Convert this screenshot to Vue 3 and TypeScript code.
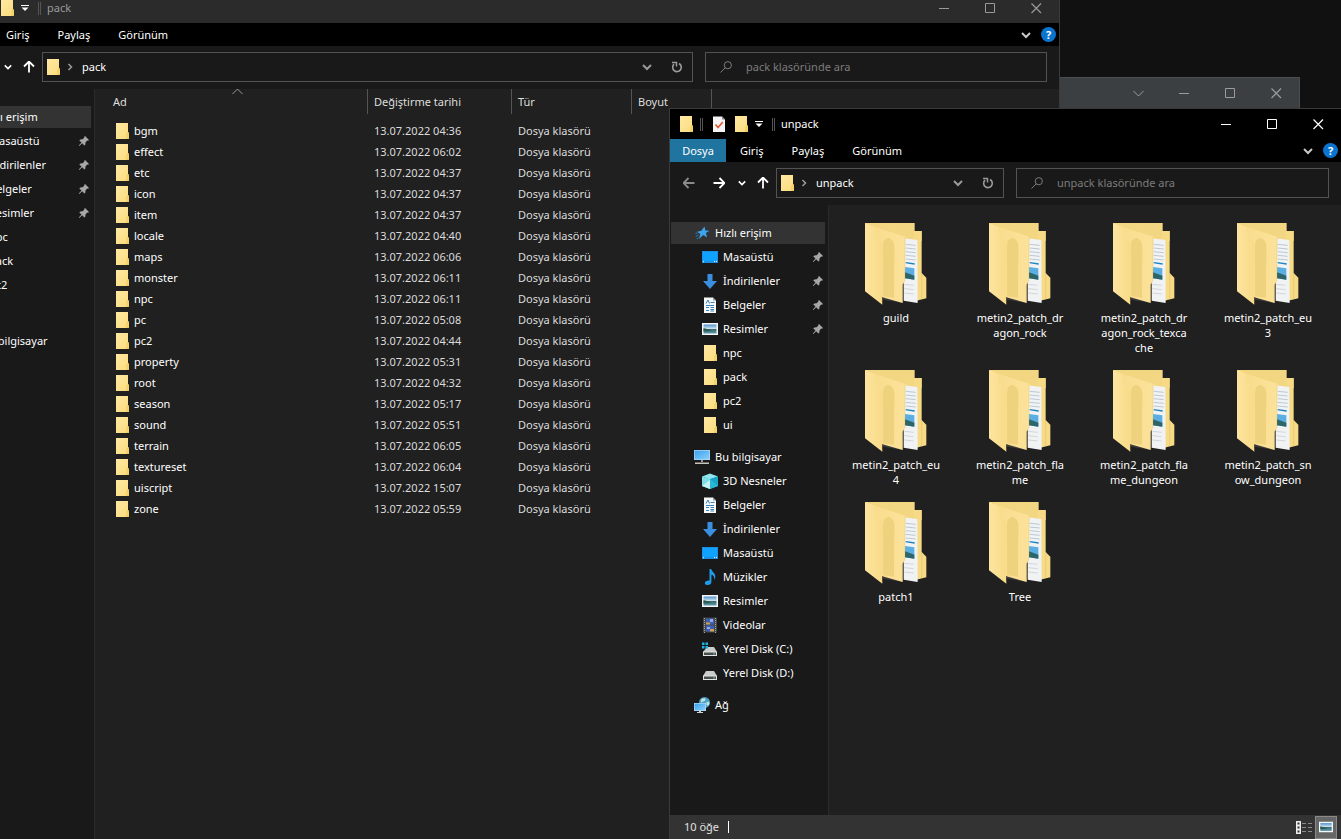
<script setup lang="ts">
import { ref } from 'vue'

interface NavItem {
  label: string
  icon: string
  child?: boolean
  pinned?: boolean
}

interface ExplorerWindow {
  id: string
  title: string
  active: boolean
  nav: NavItem[][]
}

interface FileRow {
  name: string
  date: string
}

const quickAccess: NavItem[] = [
  { label: 'Hızlı erişim', icon: 'star' },
  { label: 'Masaüstü', icon: 'desktop', child: true, pinned: true },
  { label: 'İndirilenler', icon: 'download', child: true, pinned: true },
  { label: 'Belgeler', icon: 'document', child: true, pinned: true },
  { label: 'Resimler', icon: 'picture', child: true, pinned: true },
  { label: 'npc', icon: 'folder', child: true },
  { label: 'pack', icon: 'folder', child: true },
  { label: 'pc2', icon: 'folder', child: true },
  { label: 'ui', icon: 'folder', child: true },
]

const computer: NavItem[] = [
  { label: 'Bu bilgisayar', icon: 'computer' },
  { label: '3D Nesneler', icon: 'cube', child: true },
  { label: 'Belgeler', icon: 'document', child: true },
  { label: 'İndirilenler', icon: 'download', child: true },
  { label: 'Masaüstü', icon: 'desktop', child: true },
  { label: 'Müzikler', icon: 'music', child: true },
  { label: 'Resimler', icon: 'picture', child: true },
  { label: 'Videolar', icon: 'video', child: true },
  { label: 'Yerel Disk (C:)', icon: 'disk-system', child: true },
  { label: 'Yerel Disk (D:)', icon: 'disk', child: true },
]

const windows: ExplorerWindow[] = [
  { id: 'pack', title: 'pack', active: false, nav: [quickAccess, computer.slice(0, 1)] },
  {
    id: 'unpack',
    title: 'unpack',
    active: true,
    nav: [quickAccess, computer, [{ label: 'Ağ', icon: 'network' }]],
  },
]

const tabs = ['Giriş', 'Paylaş', 'Görünüm']

const files: FileRow[] = [
  { name: 'bgm', date: '13.07.2022 04:36' },
  { name: 'effect', date: '13.07.2022 06:02' },
  { name: 'etc', date: '13.07.2022 04:37' },
  { name: 'icon', date: '13.07.2022 04:37' },
  { name: 'item', date: '13.07.2022 04:37' },
  { name: 'locale', date: '13.07.2022 04:40' },
  { name: 'maps', date: '13.07.2022 06:06' },
  { name: 'monster', date: '13.07.2022 06:11' },
  { name: 'npc', date: '13.07.2022 06:11' },
  { name: 'pc', date: '13.07.2022 05:08' },
  { name: 'pc2', date: '13.07.2022 04:44' },
  { name: 'property', date: '13.07.2022 05:31' },
  { name: 'root', date: '13.07.2022 04:32' },
  { name: 'season', date: '13.07.2022 05:17' },
  { name: 'sound', date: '13.07.2022 05:51' },
  { name: 'terrain', date: '13.07.2022 06:05' },
  { name: 'textureset', date: '13.07.2022 06:04' },
  { name: 'uiscript', date: '13.07.2022 15:07' },
  { name: 'zone', date: '13.07.2022 05:59' },
]

const tiles: string[] = [
  'guild',
  'metin2_patch_dr\nagon_rock',
  'metin2_patch_dr\nagon_rock_texca\nche',
  'metin2_patch_eu\n3',
  'metin2_patch_eu\n4',
  'metin2_patch_fla\nme',
  'metin2_patch_fla\nme_dungeon',
  'metin2_patch_sn\now_dungeon',
  'patch1',
  'Tree',
]

const queries = ref<Record<string, string>>({ pack: '', unpack: '' })
</script>

<template>
  <main class="desktop">
    <svg class="sprite" aria-hidden="true">
      <defs>
        <linearGradient id="g-folder" x1="0" y1="0" x2="1" y2="1">
          <stop offset="0" stop-color="#ffe9a2" />
          <stop offset="1" stop-color="#fbdc7e" />
        </linearGradient>
        <linearGradient id="g-front" x1="0" y1="0" x2="1" y2="0">
          <stop offset="0" stop-color="#f8dc8c" />
          <stop offset="1" stop-color="#fce29a" />
        </linearGradient>
        <linearGradient id="g-flap" x1="0" y1="0" x2="1" y2="0">
          <stop offset="0" stop-color="#fde49f" />
          <stop offset="1" stop-color="#f8db88" />
        </linearGradient>
        <linearGradient id="g-screen" x1="0" y1="0" x2="1" y2="1">
          <stop offset="0" stop-color="#3aa0ee" />
          <stop offset="1" stop-color="#8bd0fb" />
        </linearGradient>
        <linearGradient id="g-photo" x1="0" y1="0" x2="0" y2="1">
          <stop offset="0" stop-color="#4d93cf" />
          <stop offset="0.5" stop-color="#d5e8f2" />
          <stop offset="0.55" stop-color="#3c6b6c" />
          <stop offset="1" stop-color="#5d9ab0" />
        </linearGradient>
      </defs>
      <symbol id="i-folder" viewBox="0 0 16 16">
        <path d="M2 0h12v9l1 1v6H2z" fill="url(#g-folder)" />
        <path d="M12.500 16V11l1-1.500H15V16z" fill="#efc850" />
        <path d="M13.500 15v-4h1v4z" fill="#fde08a" />
      </symbol>
      <symbol id="i-check-doc" viewBox="0 0 16 16">
        <path d="M2 0.500h9l3 3V16H2z" fill="#f4f4f4" />
        <path d="M11 0.500v3h3z" fill="#8b8b8b" />
        <path d="M4.500 8.500l2.500 3L11.800 6" fill="none" stroke="#e2572b" stroke-width="1.600" />
      </symbol>
      <symbol id="i-star" viewBox="0 0 16 16">
        <path
          d="M10.500 1.500l.9 4.100 4.100.2-3.600 2.300 1.200 4.500-3.900-2.500L5 14l1.300-4.900L3 6.700l4.300-.9z"
          fill="#3aa5ee"
        />
        <path d="M3.500 8l-2 .4M4.500 10l-2.800 1.500M4.800 12.500l-2 1.500" stroke="#2b7fc0" fill="none" />
      </symbol>
      <symbol id="i-desktop" viewBox="0 0 16 16">
        <path d="M0 2h16v12H0z" fill="#1b8fe6" />
        <path d="M1 3h14v9H1z" fill="#0fa2ff" />
        <path d="M1 12.500h1M12 12.500h1M14 12.500h1" stroke="#d9f0ff" />
      </symbol>
      <symbol id="i-download" viewBox="0 0 16 16">
        <path d="M5.500 1h5v7H15l-7 8-7-8h4.500z" fill="#3a8fe0" />
      </symbol>
      <symbol id="i-document" viewBox="0 0 16 16">
        <path d="M2 0.500h9l3 3V16H2z" fill="#f6f8fa" />
        <path d="M11 0.500v3h3z" fill="#8f9aa3" />
        <path d="M4 6.500L6 3l1.500 3.500M8.500 5.500h4M4 8.500h8M4 10.500h3M8.500 10.500H12M4 13.500h3M8.500 12.500H12M8.500 14H12" fill="none" stroke="#3583b8" />
      </symbol>
      <symbol id="i-picture" viewBox="0 0 16 16">
        <path d="M0 2h16v12H0z" fill="#f5f7f8" />
        <path d="M1.500 3.500h13v9h-13z" fill="url(#g-photo)" />
        <path d="M1.500 7l5 1.500 3 1.500-8 .5z" fill="#2f5a4e" />
      </symbol>
      <symbol id="i-computer" viewBox="0 0 16 16">
        <path d="M0 1h16v10H0z" fill="#b9dcf5" />
        <path d="M.6 1.600h14.800v8.800H.6z" fill="url(#g-screen)" />
        <path d="M7 11h2v2H7z" fill="#8e9ba5" />
        <path d="M1 13.500h14v1.500H1z" fill="#c9c3bd" />
      </symbol>
      <symbol id="i-cube" viewBox="0 0 16 16">
        <path d="M0 3.500L8 .5l8 3-8 3z" fill="#8fe6ef" />
        <path d="M0 3.500l8 2.500v10l-8-3z" fill="#7fdde8" />
        <path d="M0 13l8-6v9z" fill="#c3f3f4" />
        <path d="M16 3.500L8 6v10l8-3z" fill="#17a5cb" />
        <path d="M8 6l8 7-8 3z" fill="#2bb6d6" />
      </symbol>
      <symbol id="i-music" viewBox="0 0 16 16">
        <path
          d="M7.500 0h1.800c.2 2.600 4.200 4 4 7.800 0 1.300-.6 2.200-1.200 3 .5-2.700-.4-4.300-2.700-5.200V13c0 1.800-1.600 3-3.700 3-1.700 0-2.900-.8-2.900-2.100 0-1.600 1.900-2.700 4.700-2.500z"
          fill="#1f9bea"
        />
      </symbol>
      <symbol id="i-video" viewBox="0 0 16 16">
        <path d="M1 0.500h14v15H1z" fill="#45464a" />
        <path d="M2.500 1v15M13.500 1v15" stroke="#a7a7a7" stroke-dasharray="1 1" />
        <path d="M4 1.500h8v6H4zM4 8.500h8v6H4z" fill="#3c5fb4" />
        <path d="M4 5.500h4v2H4zM8 12h4v2.500H8z" fill="#c9a24b" />
        <path d="M8 2h3v3H8zM5 10h3v2H5z" fill="#98a9df" />
      </symbol>
      <symbol id="i-disk" viewBox="0 0 16 16">
        <path d="M4 6h8l3 5H1z" fill="#c9cdcc" />
        <path d="M1 10.500h14V15H1z" fill="#e1e4e2" />
        <path d="M2 11.500h12V14H2z" fill="#4a4d4d" />
        <path d="M11.500 12.200h1.200v1.200h-1.200z" fill="#7fe0c0" />
      </symbol>
      <symbol id="i-disk-system" viewBox="0 0 16 16">
        <path d="M5 6h7l3 5H1z" fill="#c9cdcc" />
        <path d="M1 10.500h14V15H1z" fill="#e1e4e2" />
        <path d="M2 11.500h12V14H2z" fill="#4a4d4d" />
        <path d="M11.500 12.200h1.200v1.200h-1.200z" fill="#7fe0c0" />
        <path d="M0 1.500h2.500V4H0zM3.500 1.500H6V4H3.500zM0 5h2.500v2.500H0zM3.500 5H6v2.500H3.500z" fill="#1cb7e8" />
      </symbol>
      <symbol id="i-network" viewBox="0 0 16 16">
        <circle cx="10.500" cy="5.500" r="5.500" fill="#4c9fc4" />
        <path d="M7 2.500c2-2 5-1.500 4.500.5S8 4 7 6zM12.500 5c2-.6 3 0 3 1.500S13 9.500 12.500 8z" fill="#bfe3dd" />
        <path d="M0 6h12v8H0z" fill="#b9dcf5" />
        <path d="M.6 6.600h10.800v6.800H.6z" fill="url(#g-screen)" />
        <path d="M5 14h2v1h2v1H3v-1h2z" fill="#cfd6da" />
      </symbol>
      <symbol id="i-pin" viewBox="0 0 12 12">
        <path d="M7 1l4 4-1 .8-.8-.2L7.500 7.500 7.300 9.800 6.300 10.600 4.200 8.300 1.300 11 .8 10.600 3.500 7.600 1.300 5.500l1-1 2.300-.2L6.400 2.600 6.200 1.700z" fill="#a7a7a7" />
      </symbol>
      <symbol id="i-menu-caret" viewBox="0 0 8 8">
        <path d="M0 1.500h8" stroke="currentColor" stroke-width="1" />
        <path d="M.5 3.500h7L4 7z" fill="currentColor" />
      </symbol>
      <symbol id="i-chevron" viewBox="0 0 10 10">
        <path d="M1 3l4 4 4-4" fill="none" stroke="currentColor" stroke-width="2" />
      </symbol>
      <symbol id="i-crumb" viewBox="0 0 10 10">
        <path d="M3.500 2l3 3-3 3" fill="none" stroke="currentColor" stroke-width="1.500" />
      </symbol>
      <symbol id="i-arrow" viewBox="0 0 12 12">
        <path d="M0.500 6h11M6.500 1l5 5-5 5" fill="none" stroke="currentColor" stroke-width="1.800" />
      </symbol>
      <symbol id="i-refresh" viewBox="0 0 12 12">
        <path d="M8 2.500A4.300 4.300 0 1 1 3 3.200" fill="none" stroke="currentColor" stroke-width="1.600" />
        <path d="M1 1.500h4.500V5.500" fill="none" stroke="currentColor" stroke-width="1.500" />
      </symbol>
      <symbol id="i-search" viewBox="0 0 12 12">
        <circle cx="7.800" cy="4.200" r="3.600" fill="none" stroke="currentColor" />
        <path d="M5.200 6.800L.5 11.500" stroke="currentColor" />
      </symbol>
      <symbol id="i-minimize" viewBox="0 0 11 11">
        <path d="M0 5.500h10" stroke="currentColor" />
      </symbol>
      <symbol id="i-maximize" viewBox="0 0 11 11">
        <path d="M.5 .5h9v9h-9z" fill="none" stroke="currentColor" />
      </symbol>
      <symbol id="i-close" viewBox="0 0 11 11">
        <path d="M.5 .5l9.500 9.500M10 .5L.5 10" stroke="currentColor" stroke-width="1.200" />
      </symbol>
      <symbol id="i-thin-chevron" viewBox="0 0 11 11">
        <path d="M.5 3l5 5 5-5" fill="none" stroke="currentColor" />
      </symbol>
      <symbol id="i-big-folder" viewBox="44 40 186 246">
        <path d="M44 40h149v24h21v30H60z" fill="#f3d681" />
        <path d="M190 64h24v126l14 14v62l-30 7z" fill="#f6da86" />
        <path d="M214 190v76" stroke="#e5c469" stroke-width="2" />
        <path d="M160 86l41 5 1 189-42-7z" fill="#f1f2f4" />
        <path d="M166 104l30 3M166 115l30 3M166 126l30 3M166 137l30 3M166 148l30 3" stroke="#9db3c6" stroke-width="2" />
        <path d="M166 159l27 4" stroke="#1c84c4" stroke-width="4" />
        <path d="M164 172l28 4v34l-28-4z" fill="#5aaee2" />
        <path d="M164 188l28 10v12l-28-4z" fill="#2d6568" />
        <path d="M162 224l28 3M162 237l28 3M162 250l28 3" stroke="#c3c7cc" stroke-width="2" />
        <path d="M94 264h30l34 8v8l-60-10z" fill="#3a3a3a" />
        <path d="M72 51l93 30-1 132-7 12v55l-61-17-34-30V60z" fill="url(#g-front)" />
        <path d="M98 106q0-18 16-22 17 6 18 24l-1 156-33-4z" fill="#efd27d" />
        <path d="M44 40l28 11v24q24 16 25 40l-3 90 2 80-52-40z" fill="url(#g-flap)" />
        <path d="M164 84l-1 129-7 12v52" fill="none" stroke="#e0bd62" stroke-width="1" />
      </symbol>
    </svg>

    <section class="backdrop-window" aria-label="Arka plan penceresi">
      <button v-for="g in ['thin-chevron', 'minimize', 'maximize', 'close']" :key="g" class="caption" :aria-label="g">
        <svg class="glyph"><use :href="'#i-' + g" /></svg>
      </button>
    </section>

    <section v-for="w in windows" :key="w.id" class="window" :class="['window-' + w.id, { active: w.active }]">
      <header class="titlebar">
        <svg class="icon"><use href="#i-folder" /></svg>
        <span class="divider"></span>
        <button class="quick" aria-label="Özellikler"><svg class="icon"><use href="#i-check-doc" /></svg></button>
        <button class="quick" aria-label="Yeni klasör"><svg class="icon"><use href="#i-folder" /></svg></button>
        <button class="quick customize" aria-label="Özelleştir"><svg class="caret"><use href="#i-menu-caret" /></svg></button>
        <span class="divider"></span>
        <h1 class="title">{{ w.title }}</h1>
        <div class="captions">
          <button v-for="g in ['minimize', 'maximize', 'close']" :key="g" class="caption" :aria-label="g">
            <svg class="glyph"><use :href="'#i-' + g" /></svg>
          </button>
        </div>
      </header>

      <nav class="ribbon">
        <button class="tab tab-file">Dosya</button>
        <button v-for="t in tabs" :key="t" class="tab">{{ t }}</button>
        <button class="expand" aria-label="Şeridi genişlet"><svg class="small"><use href="#i-chevron" /></svg></button>
        <button class="help" aria-label="Yardım">?</button>
      </nav>

      <div class="toolbar">
        <button class="nav-btn dim" aria-label="Geri"><svg class="arrow back"><use href="#i-arrow" /></svg></button>
        <button class="nav-btn" aria-label="İleri"><svg class="arrow"><use href="#i-arrow" /></svg></button>
        <button class="nav-btn recent" aria-label="Son konumlar"><svg class="tiny"><use href="#i-chevron" /></svg></button>
        <button class="nav-btn up-btn" aria-label="Yukarı"><svg class="arrow up"><use href="#i-arrow" /></svg></button>
        <div class="address">
          <svg class="icon"><use href="#i-folder" /></svg>
          <svg class="small crumb"><use href="#i-crumb" /></svg>
          <button class="path">{{ w.title }}</button>
          <button class="addr-btn" aria-label="Önceki konumlar"><svg class="small"><use href="#i-chevron" /></svg></button>
          <button class="addr-btn" aria-label="Yenile"><svg class="arrow"><use href="#i-refresh" /></svg></button>
        </div>
        <label class="search">
          <svg class="arrow"><use href="#i-search" /></svg>
          <input
            v-model="queries[w.id]"
            type="text"
            :aria-label="w.title + ' klasöründe ara'"
            :placeholder="w.title + ' klasöründe ara'"
          />
        </label>
      </div>

      <div class="body">
        <aside class="sidebar">
          <ul v-for="(group, gi) in w.nav" :key="gi" class="group">
            <li v-for="(item, i) in group" :key="item.label" class="nav-row">
              <a href="#" class="nav-item" :class="{ child: item.child, selected: gi === 0 && i === 0 }">
                <svg class="icon"><use :href="'#i-' + item.icon" /></svg>
                <span>{{ item.label }}</span>
                <svg v-if="item.pinned" class="pin"><use href="#i-pin" /></svg>
              </a>
            </li>
          </ul>
        </aside>

        <div v-if="w.id === 'pack'" class="content">
          <table class="files">
            <thead>
              <tr>
                <th class="col-name"><div class="head">Ad<svg class="sort"><use href="#i-thin-chevron" /></svg></div></th>
                <th class="col-date"><div class="head">Değiştirme tarihi</div></th>
                <th class="col-type"><div class="head">Tür</div></th>
                <th class="col-size"><div class="head">Boyut</div></th>
              </tr>
            </thead>
            <tbody>
              <tr v-for="f in files" :key="f.name">
                <td><div class="file"><svg class="icon"><use href="#i-folder" /></svg>{{ f.name }}</div></td>
                <td class="meta">{{ f.date }}</td>
                <td class="meta">Dosya klasörü</td>
                <td></td>
              </tr>
            </tbody>
          </table>
        </div>

        <ul v-else class="content tiles">
          <li v-for="t in tiles" :key="t" class="tile">
            <svg class="big"><use href="#i-big-folder" /></svg>
            <span>{{ t }}</span>
          </li>
        </ul>
      </div>

      <footer v-if="w.active" class="status">
        <span class="count">10 öğe</span>
        <span class="status-line"></span>
        <button class="view" aria-label="Ayrıntılar">
          <svg class="view-list" viewBox="0 0 16 13">
            <path d="M0 0h5v13H0z" fill="#eee" />
            <path d="M1.500 1.500h2v2h-2zM1.500 5.500h2v2h-2zM1.500 9.500h2v2h-2z" fill="#333" />
            <path d="M6 2.500h4M12 2.500h4M6 6.500h4M12 6.500h4M6 10.500h4M12 10.500h4" stroke="#8a8a8a" />
          </svg>
        </button>
        <button class="view view-on" aria-label="Büyük simgeler"><svg class="view-pic"><use href="#i-picture" /></svg></button>
      </footer>
    </section>
  </main>
</template>

<style>
html,
body,
#app {
  height: 100%;
}
body {
  margin: 0;
  background: #111;
  overflow: hidden;
}
</style>

<style scoped>
* {
  box-sizing: border-box;
}
.desktop {
  position: relative;
  height: 100%;
  overflow: hidden;
  background: #111;
  color: #fff;
  font-family: 'Noto Sans', 'Open Sans', sans-serif;
  font-size: 11px;
  line-height: 16px;
}
.sprite {
  position: absolute;
  width: 0;
  height: 0;
}
button {
  display: flex;
  align-items: center;
  justify-content: center;
  margin: 0;
  padding: 0;
  border: 0;
  background: none;
  color: inherit;
  font: inherit;
}
ul {
  margin: 0;
  padding: 0;
  list-style: none;
}
svg {
  display: block;
  flex: none;
}
.icon {
  width: 16px;
  height: 16px;
}
.glyph {
  width: 11px;
  height: 11px;
}
.arrow {
  width: 12px;
  height: 12px;
}
.small {
  width: 10px;
  height: 10px;
}
.tiny,
.caret {
  width: 8px;
  height: 8px;
}
.back {
  transform: rotate(180deg);
}
.up {
  transform: rotate(-90deg);
}

.backdrop-window {
  position: absolute;
  top: 77px;
  right: 41px;
  display: flex;
  justify-content: flex-end;
  width: 241px;
  height: 60px;
  border: 1px solid #4a4e50;
  background: #3b3f41;
  color: #9a9c9d;
}
.backdrop-window .caption {
  height: 30px;
}

.window {
  position: absolute;
  display: flex;
  flex-direction: column;
  border: 1px solid #3a3a3a;
  background: #191919;
}
.window-pack {
  top: -8px;
  bottom: -40px;
  left: -65px;
  right: 281px;
}
.window-unpack {
  top: 108px;
  bottom: 0;
  left: 669px;
  right: 0;
  border-right: 0;
  border-bottom: 0;
}

.titlebar {
  display: flex;
  align-items: center;
  flex: none;
  height: 30px;
  padding-left: 8px;
  background: #2b2b2b;
  color: #9a9a9a;
}
.active .titlebar {
  background: #000;
  color: #fff;
}
.divider {
  width: 3px;
  height: 13px;
  margin: 0 5px 0 6px;
  border: solid #555;
  border-width: 0 1px;
}
.quick {
  width: 22px;
  height: 22px;
}
.customize {
  width: 14px;
  color: #fff;
}
.customize + .divider {
  margin-right: 6px;
}
.title {
  margin: 0;
  font-size: 11px;
  font-weight: 400;
}
.captions {
  display: flex;
  margin-left: auto;
}
.caption {
  width: 46px;
  height: 30px;
}

.ribbon {
  display: flex;
  flex: none;
  height: 23px;
  background: #000;
}
.tab {
  padding: 0 14px;
}
.tab-file {
  width: 56px;
  padding: 0;
  background: #1f74a0;
}
.expand {
  width: 24px;
  margin-left: auto;
  color: #c8c8c8;
}
.help {
  align-self: center;
  width: 15px;
  height: 15px;
  margin: 0 3px;
  border-radius: 50%;
  background: #0a74cf;
  color: #fff;
  font-weight: 700;
}

.toolbar {
  display: flex;
  align-items: center;
  flex: none;
  height: 43px;
  padding: 0 12px 1px 4px;
}
.nav-btn {
  width: 30px;
  height: 30px;
  color: #fff;
}
.nav-btn.dim {
  color: #8a8a8a;
}
.nav-btn.recent {
  width: 15px;
}
.nav-btn.up-btn {
  width: 27px;
}
.address,
.search {
  display: flex;
  align-items: center;
  height: 30px;
  border: 1px solid #535353;
}
.address {
  flex: 1;
  padding-left: 2px;
}
.crumb {
  margin: 0 7px 0 4px;
  color: #9a9a9a;
}
.path {
  color: #fff;
  margin-right: auto;
}
.addr-btn {
  width: 30px;
  height: 28px;
  color: #9a9a9a;
}
.search {
  width: 313px;
  margin-left: 12px;
  padding-left: 14px;
  color: #7c7c7c;
}
.window-pack .search {
  width: 342px;
}
.search input {
  flex: 1;
  min-width: 0;
  margin-left: 14px;
  padding: 0;
  border: 0;
  outline: 0;
  background: none;
  color: #f0f0f0;
  font: inherit;
}
.search input::placeholder {
  color: #7c7c7c;
  opacity: 1;
}

.body {
  display: flex;
  flex: 1;
  min-height: 0;
}
.sidebar {
  flex: none;
  width: 159px;
  padding: 16px 3px 0 1px;
  border-right: 1px solid #2b2b2b;
}
.group {
  padding-bottom: 8px;
}
.nav-row {
  padding: 1px 0;
}
.nav-item {
  display: flex;
  align-items: center;
  gap: 5px;
  height: 22px;
  padding: 0 1px 0 23px;
  color: #fff;
  text-decoration: none;
  white-space: nowrap;
}
.nav-item.child {
  padding-left: 31px;
}
.nav-item.selected {
  background: #333;
}
.pin {
  width: 12px;
  height: 12px;
  margin-left: auto;
}
.content {
  flex: 1;
  min-width: 0;
  background: #202020;
}

.files {
  table-layout: fixed;
  width: 617px;
  border-collapse: collapse;
}
.files th {
  height: 31px;
  padding: 0;
  font-weight: 400;
  text-align: left;
  vertical-align: top;
  color: #dedede;
}
.head {
  position: relative;
  display: flex;
  align-items: center;
  height: 25px;
  padding-left: 6px;
  border-right: 1px solid #555;
}
.col-name {
  width: 273px;
}
.col-name .head {
  padding-left: 18px;
}
.col-date {
  width: 144px;
}
.col-type {
  width: 120px;
}
.sort {
  position: absolute;
  top: -3px;
  left: 137px;
  width: 11px;
  height: 11px;
  color: #9a9a9a;
  transform: rotate(180deg);
}
.files td {
  height: 21px;
  padding: 0;
  white-space: nowrap;
}
.files .meta {
  padding-left: 6px;
  color: #dcdcdc;
}
.file {
  display: flex;
  align-items: center;
  gap: 4px;
  padding-left: 19px;
}

.tiles {
  display: grid;
  grid-template-columns: repeat(auto-fill, 124px);
  align-content: start;
  row-gap: 15px;
  padding: 18px 0 0 5px;
}
.tile {
  display: flex;
  flex-direction: column;
  align-items: center;
  gap: 5px;
  line-height: 15px;
  text-align: center;
  white-space: pre;
}
.big {
  width: 62px;
  height: 82px;
}

.status {
  display: flex;
  align-items: center;
  flex: none;
  height: 24px;
  padding: 0 4px 0 14px;
  background: #333;
  color: #e0e0e0;
}
.status-line {
  width: 1px;
  height: 12px;
  margin: 0 auto 0 9px;
  background: #fff;
}
.view {
  width: 22px;
  height: 23px;
}
.view-on {
  border: 1px solid #8a8a8a;
  background: #666;
}
.view-list {
  width: 16px;
  height: 13px;
}
.view-pic {
  width: 14px;
  height: 14px;
}
</style>
